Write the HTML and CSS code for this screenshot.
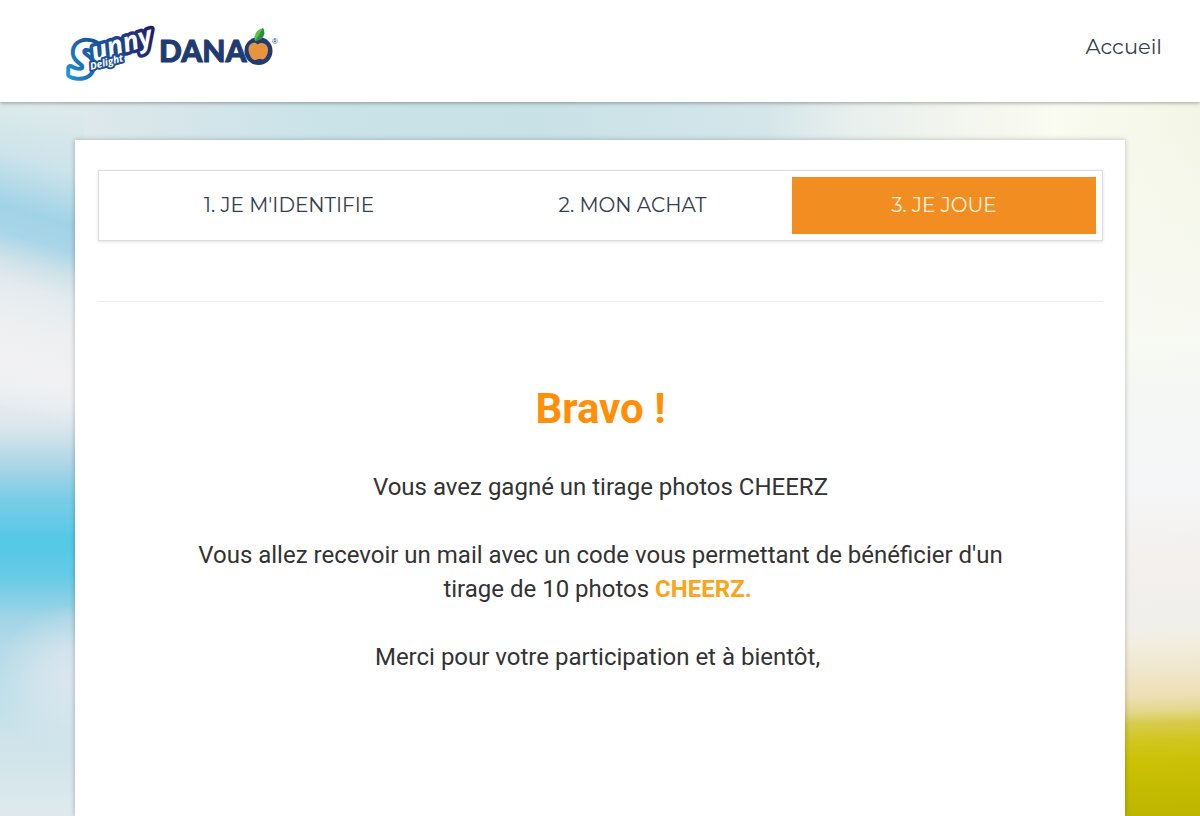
FILE: index.html
```
<!DOCTYPE html>
<html lang="fr">
<head>
    <meta charset="utf-8">
    <meta name="viewport" content="width=device-width, initial-scale=1">
    <title>Sunny Delight Danao</title>
    <link rel="stylesheet" href="styles.css">
</head>
<body>
    <header class="header">
        <a class="logo" href="#" aria-label="Sunny Delight Danao">
            <svg width="220" height="60" viewBox="60 22 220 60">
                <defs>
                    <linearGradient id="blueS" x1="0" y1="1" x2="0.6" y2="0">
                        <stop offset="0.1" stop-color="#1f9fd8"/>
                        <stop offset="0.5" stop-color="#1a6fb3"/>
                        <stop offset="1" stop-color="#1b4d93"/>
                    </linearGradient>
                    <linearGradient id="blueUnny" x1="0" y1="0" x2="1" y2="0">
                        <stop offset="0" stop-color="#1b5ea5"/>
                        <stop offset="0.5" stop-color="#1f3f88"/>
                        <stop offset="1" stop-color="#261d69"/>
                    </linearGradient>
                </defs>

                <!-- Sunny Delight -->
                <g class="sunny">
                    <text class="sunny-s" stroke="url(#blueS)" transform="translate(69 76) rotate(2)">S</text>
                    <text class="sunny-unny" stroke="url(#blueUnny)" transform="translate(94 62) rotate(-17)">unny</text>
                    <text class="sunny-delight" stroke="#1b4f98" transform="translate(91 70) rotate(-15)">Delight</text>
                </g>

                <!-- Danao -->
                <text class="danao" x="159" y="62">DANA</text>
                <circle cx="258.500" cy="51" r="14" fill="#213a70"/>
                <path d="M258 44C254 41 248 44 248.500 50C249 55 252 60 255 60C257 60 257 59 259 59C261 59 262 60 264 59C267 57 269 51 267.500 47C266 43 261 42 258 44Z" fill="#e8943f"/>
                <path d="M258 44C257 42 256.500 41 256 39" fill="none" stroke="#213a70" stroke-width="2"/>
                <path d="M255 41C253 34 258 29 263 28C266 33 264 40 255 41Z" fill="#5cc04c"/>
                <path d="M255 41C258 37 260 33 263 28C266 33 264 40 255 41Z" fill="#2c8f3c"/>
                <text class="registered" x="272" y="44">®</text>
            </svg>
        </a>
        <nav>
            <a class="nav-link" href="#">Accueil</a>
        </nav>
    </header>

    <main class="card">
        <ul class="steps">
            <li class="step">1. JE M'IDENTIFIE</li>
            <li class="step">2. MON ACHAT</li>
            <li class="step active">3. JE JOUE</li>
        </ul>
        <hr class="separator">
        <div class="message">
            <h1>Bravo !</h1>
            <p>Vous avez gagné un tirage photos CHEERZ</p>
            <p>Vous allez recevoir un mail avec un code vous permettant de bénéficier d'un tirage de 10 photos <a class="cheerz" href="#">CHEERZ.&nbsp;</a></p>
            <p>Merci pour votre participation et à bientôt,&nbsp;</p>
        </div>
    </main>
</body>
</html>
```
FILE: styles.css
```
* {
    box-sizing: border-box;
}

/* Ciel flou : bords gauche et droit, puis bande du haut */
body {
    margin: 0;
    min-height: 100vh;
    display: flex;
    flex-direction: column;
    font-family: Roboto, "Liberation Sans", sans-serif;
    color: #333;
    background:
        linear-gradient(196deg, rgba(217, 231, 236, 0) 110px, #cbe3ea 170px, #a0d3e6 220px, #a9d5e7 245px, #cfe2ea 270px, #e3ebee 292px, #edeff1 330px, #f1f1f3 365px, rgba(239, 239, 241, 0) 415px) 0 0 / 7% 460px no-repeat,
        radial-gradient(80px 75px at 90% 50%, rgba(221, 231, 239, 0.95), rgba(221, 231, 239, 0.7) 40%, rgba(221, 231, 239, 0)) 0 600px / 7% 160px no-repeat,
        linear-gradient(180deg, rgba(240, 240, 242, 0) 250px, #eeeff1 385px, #d8e6ec 429px, #abd6e6 465px, #7ccde6 497px, #57c8e7 537px, #57c8e7 551px, #6acbe6 579px, #9fd4e6 616px, #b5dae7 648px, #bddfe9 694px, #cde3ea 739px, #dde9ed 808px) 0 0 / 7% 816px no-repeat,
        linear-gradient(178deg, rgba(245, 247, 238, 0) 130px, #f8faf2 328px, #f5f7f5 397px, #f5f6f7 488px, #f3f0ee 557px, #f1efec 625px, #f1eede 646px, #f0e6cd 671px, #efdfb4 697px, #e4d78c 712px, #d6cb4c 724px, #d1c61c 742px, #cbc003 765px, #bdb500 816px) 100% 0 / 7% 816px no-repeat,
        linear-gradient(90deg, #e1ecec 0%, #d9e6ea 12%, #c9e3e9 27%, #c8e1e7 45%, #d5e6ea 64%, #e8efed 71%, #f1f4ee 78%, #fafbf1 88%, #f3f6e6 100%);
}

.header {
    display: flex;
    justify-content: space-between;
    align-items: center;
    height: 102px;
    padding: 0 38px 10px 60px;
    background: #fff;
    box-shadow: 0 1px 4px rgba(0, 0, 0, 0.35);
}

.logo {
    display: flex;
    padding-top: 12px;
}

.logo svg {
    overflow: visible;
}

.nav-link {
    font-family: Montserrat, Inter, sans-serif;
    font-size: 21px;
    color: #34404e;
    text-decoration: none;
}

/* Logo */
.sunny {
    font-family: "Open Sans", sans-serif;
    font-style: italic;
    font-weight: 700;
    fill: #fff;
    stroke-width: 7px;
    stroke-linejoin: round;
    paint-order: stroke;
}

.sunny-s {
    font-size: 48px;
    stroke-width: 8px;
}

.sunny-unny {
    font-size: 27px;
}

.sunny-delight {
    font-size: 10px;
    stroke-width: 4px;
}

.danao {
    font-family: Lato, sans-serif;
    font-size: 30px;
    font-weight: 900;
    fill: #213a70;
    stroke: #213a70;
    stroke-width: 1px;
}

.registered {
    font-family: "Liberation Sans", sans-serif;
    font-size: 8px;
    fill: #213a70;
}

.card {
    flex: 1;
    width: 87.5%;
    margin: 38px auto 0;
    padding: 30px 22px 60px 23px;
    background: #fff;
    box-shadow: 0 0 5px rgba(0, 0, 0, 0.25);
}

/* Etapes du jeu */
.steps {
    display: grid;
    grid-template-columns: 368fr 319fr 304fr;
    margin: 0;
    padding: 6px;
    list-style: none;
    border: 1px solid #dcdddf;
    box-shadow: 0 1px 3px rgba(0, 0, 0, 0.12);
}

.step {
    padding: 14px 0 15px;
    font-family: Montserrat, Inter, sans-serif;
    font-size: 20px;
    line-height: 28px;
    text-align: center;
    color: #34404e;
}

.step.active {
    background: #f28d22;
    color: #fff3dc;
}

.separator {
    margin: 60px 0 0;
    border: 0;
    border-top: 1px solid #eee;
}

.message {
    padding: 82px 92px 0;
    text-align: center;
    font-size: 24px;
    line-height: 34px;
}

.message h1 {
    margin: 0 0 36px;
    font-size: 42px;
    line-height: 50px;
    color: #ff8f08;
}

.message p {
    margin: 0 0 34px;
}

.cheerz {
    font-weight: bold;
    color: #f9a61a;
    text-decoration: none;
}
```
